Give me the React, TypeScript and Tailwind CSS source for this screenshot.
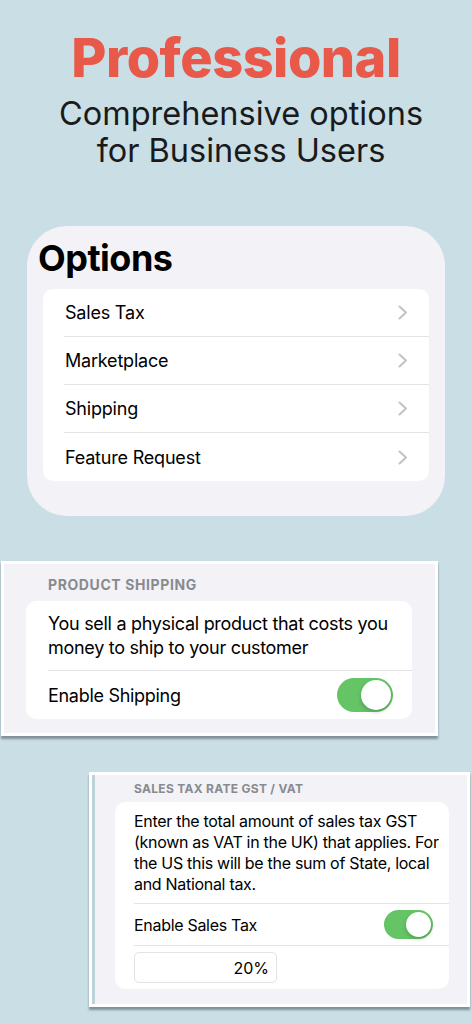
const font = { fontFamily: "Inter, 'Noto Sans', sans-serif" };

const Toggle = ({ big }: { big?: boolean }) => (
  <div
    className={`flex items-center justify-end rounded-full bg-[#65c466] p-[2px] ${
      big ? "h-[34px] w-[56px]" : "h-[29px] w-[49px]"
    }`}
  >
    <div
      className={`rounded-full bg-white shadow-[0_2px_4px_rgba(0,0,0,0.2)] ${
        big ? "h-[30px] w-[30px]" : "h-[25px] w-[25px]"
      }`}
    />
  </div>
);

const Chevron = () => (
  <svg width="10" height="15" viewBox="0 0 10 15" fill="none">
    <polyline
      points="1.5,1.5 8,7.5 1.5,13.5"
      stroke="#c2c2c6"
      strokeWidth="2"
      strokeLinecap="round"
      strokeLinejoin="round"
    />
  </svg>
);

const options = ["Sales Tax", "Marketplace", "Shipping", "Feature Request"];

export default function App() {
  return (
    <div
      className="min-h-[1024px] w-[472px] overflow-hidden bg-[#c9dee5] text-black"
      style={font}
    >
      {/* Heading */}
      <div className="flex flex-col items-center pt-[31px]">
        <h1 className="text-[54px] font-extrabold leading-none tracking-[-0.5px] text-[#e8594a]">
          Professional
        </h1>
        <p className="mt-[10px] pl-[10px] text-center text-[32.5px] leading-[37px] text-[#1a1a1a]">
          Comprehensive options
          <br />
          for Business Users
        </p>
      </div>

      {/* Options card */}
      <div className="mx-[27px] mt-[57px] rounded-[40px] bg-[#f2f2f7] pb-[35px] pt-[14px]">
        <h2 className="pl-[11px] text-[36px] font-bold leading-none tracking-[-0.5px]">
          Options
        </h2>
        <div className="mx-[16px] mt-[13px] overflow-hidden rounded-[10px] bg-white">
          {options.map((o, i) => (
            <div key={o} className="pl-[21px]">
              <div
                className={`flex h-12 items-center justify-between pr-[21px] ${
                  i < options.length - 1 ? "border-b border-[#e3e3e6]" : ""
                }`}
              >
                <span className="pl-[1px] text-[18px] tracking-[-0.2px]">{o}</span>
                <Chevron />
              </div>
            </div>
          ))}
        </div>
      </div>

      {/* Product shipping panel */}
      <div className="ml-[1px] mt-[45px] w-[437px] border-[3px] border-white bg-[#f2f2f7] shadow-[0_3px_2px_rgba(60,70,75,0.5)]">
        <div className="pb-[14px] pt-[14px]">
          <div className="pl-[44px] text-[14px] font-bold leading-none tracking-[0.6px] text-[#8a8a8e]">
            PRODUCT SHIPPING
          </div>
          <div className="ml-[22px] mr-[23px] mt-[9px] rounded-[10px] bg-white">
            <div className="ml-[22px] border-b border-[#e3e3e6] pb-[10px] pr-[10px] pt-[11px] text-[18px] leading-[24px] tracking-[-0.3px]">
              You sell a physical product that costs you money to ship to your
              customer
            </div>
            <div className="flex h-12 items-center justify-between pl-[22px] pr-[19px]">
              <span className="text-[18px] tracking-[-0.3px]">Enable Shipping</span>
              <Toggle big />
            </div>
          </div>
        </div>
      </div>

      {/* Sales tax panel */}
      <div className="ml-[89px] mt-[36px] w-[381px] border-[3px] border-white shadow-[0_3px_2px_rgba(60,70,75,0.5)]">
        <div className="border-l-[3px] border-[#bcd2da] bg-[#f2f2f7] pb-[15px] pt-[8px]">
          <div className="pl-[39px] text-[12px] font-bold leading-none tracking-[0.3px] text-[#8a8a8e]">
            SALES TAX RATE GST / VAT
          </div>
          <div className="ml-[20px] mr-[18px] mt-[7px] rounded-[10px] bg-white">
            <div className="ml-[19px] border-b border-[#e3e3e6] pb-[8px] pr-[5px] pt-[9px] text-[16px] leading-[21px] tracking-[-0.3px]">
              Enter the total amount of sales tax GST (known as VAT in the UK)
              that applies. For the US this will be the sum of State, local and
              National tax.
            </div>
            <div className="ml-[19px] flex h-[42px] items-center justify-between border-b border-[#e3e3e6] pr-[16px]">
              <span className="text-[16px] tracking-[-0.3px]">Enable Sales Tax</span>
              <Toggle />
            </div>
            <div className="pb-[6px] pl-[19px] pt-[6px]">
              <div className="flex h-[31px] w-[143px] items-center justify-end rounded-[5px] border border-[#e3e3e6] pr-[7px] text-[16px]">
                20%
              </div>
            </div>
          </div>
        </div>
      </div>
    </div>
  );
}
